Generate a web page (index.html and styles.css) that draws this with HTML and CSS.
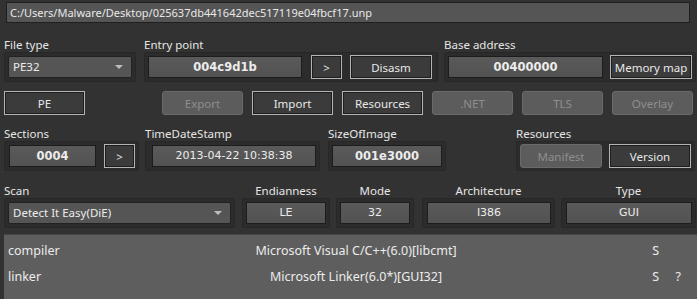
FILE: index.html
```html
<!DOCTYPE html>
<html lang="en">
<head>
    <meta charset="utf-8">
    <title>Detect It Easy</title>
    <link rel="stylesheet" href="styles.css">
</head>
<body>
    <div class="path">C:/Users/Malware/Desktop/025637db441642dec517119e04fbcf17.unp</div>

    <div class="row row1">
        <div class="group g-filetype">
            <div class="label">File type</div>
            <div class="frame">
                <div class="combo w-filetype">PE32<span class="arrow"></span></div>
            </div>
        </div>
        <div class="group g-entry">
            <div class="label">Entry point</div>
            <div class="frame">
                <div class="value bold w-entry">004c9d1b</div>
                <button class="btn small">&gt;</button>
                <button class="btn w-82">Disasm</button>
            </div>
        </div>
        <div class="group g-base">
            <div class="label">Base address</div>
            <div class="frame">
                <div class="value bold w-base">00400000</div>
                <button class="btn w-82">Memory map</button>
            </div>
        </div>
    </div>

    <div class="row row2">
        <button class="btn w-81">PE</button>
        <div class="buttons">
            <button class="btn off">Export</button>
            <button class="btn">Import</button>
            <button class="btn">Resources</button>
            <button class="btn off">.NET</button>
            <button class="btn off">TLS</button>
            <button class="btn off">Overlay</button>
        </div>
    </div>

    <div class="row row3">
        <div class="group g-sections">
            <div class="label">Sections</div>
            <div class="frame">
                <div class="value bold w-sections">0004</div>
                <button class="btn small">&gt;</button>
            </div>
        </div>
        <div class="group g-time">
            <div class="label">TimeDateStamp</div>
            <div class="frame">
                <div class="value w-time">2013-04-22 10:38:38</div>
            </div>
        </div>
        <div class="group g-size">
            <div class="label">SizeOfImage</div>
            <div class="frame">
                <div class="value bold w-size">001e3000</div>
            </div>
        </div>
        <div class="group g-res">
            <div class="label">Resources</div>
            <div class="frame">
                <button class="btn off w-82">Manifest</button>
                <button class="btn w-82">Version</button>
            </div>
        </div>
    </div>

    <div class="row row4">
        <div class="group g-scan">
            <div class="label">Scan</div>
            <div class="frame">
                <div class="combo w-scan">Detect It Easy(DiE)<span class="arrow"></span></div>
            </div>
        </div>
        <div class="group g-endian center">
            <div class="label">Endianness</div>
            <div class="frame">
                <div class="value w-endian">LE</div>
            </div>
        </div>
        <div class="group g-mode center">
            <div class="label">Mode</div>
            <div class="frame">
                <div class="value w-mode">32</div>
            </div>
        </div>
        <div class="group g-arch center">
            <div class="label">Architecture</div>
            <div class="frame">
                <div class="value w-arch">I386</div>
            </div>
        </div>
        <div class="group g-type center">
            <div class="label">Type</div>
            <div class="frame">
                <div class="value w-type">GUI</div>
            </div>
        </div>
    </div>

    <div class="results">
        <div class="result">
            <span class="kind">compiler</span>
            <span class="name">Microsoft Visual C/C++(6.0)[libcmt]</span>
            <span class="flag">S</span>
            <span class="info"></span>
        </div>
        <div class="result">
            <span class="kind">linker</span>
            <span class="name">Microsoft Linker(6.0*)[GUI32]</span>
            <span class="flag">S</span>
            <span class="info">?</span>
        </div>
    </div>
</body>
</html>
```

FILE: styles.css
```css
body {
    margin: 0;
    padding-top: 2px;
    background-color: #323232;
    color: #e6e6e6;
    font-family: "Noto Sans", "Open Sans", sans-serif;
    font-size: 11px;
    width: 697px;
    height: 299px;
    overflow: hidden;
}
.path {
    margin: 0 7px 0 6px;
    height: 19px;
    line-height: 19px;
    padding-left: 3px;
    background: #555;
    border: 1px solid #1f1f1f;
    color: #e8e8e8;
}
.row {
    display: flex;
    align-items: flex-end;
}
.row1 { margin-top: 14px; padding-left: 4px; }
.row2 { margin-top: 9px; padding-left: 4px; height: 24px; }
.row3 { margin-top: 11px; padding-left: 4px; }
.row4 { margin-top: 12px; padding-left: 4px; }

.label {
    height: 15px;
    line-height: 15px;
    font-size: 11.5px;
    color: #e6e6e6;
}
.center .label { text-align: center; }
.frame {
    display: flex;
    align-items: center;
    height: 28px;
    padding: 0 3px;
    background: #2c2c2c;
    border: 1px solid #272727;
    border-radius: 2px;
}

/* group positions */
.g-filetype { width: 132px; }
.g-entry { width: 294px; margin-left: 8px; }
.g-base { width: 252px; margin-left: 6px; }
.g-sections { width: 135px; }
.g-time { width: 175px; margin-left: 6px; }
.g-size { width: 118px; margin-left: 8px; }
.g-res { width: 179px; margin-left: 70px; }
.g-scan { width: 231px; }
.g-endian { width: 88px; margin-left: 7px; }
.g-mode { width: 78px; margin-left: 6px; }
.g-arch { width: 133px; margin-left: 8px; }
.g-type { width: 135px; margin-left: 6px; }

.value {
    height: 20px;
    line-height: 20px;
    background: linear-gradient(#5a5a5a, #525252);
    border: 1px solid #1c1c1c;
    text-align: center;
    font-family: "DejaVu Sans", Verdana, sans-serif;
    font-size: 11px;
    color: #ececec;
}
.value.bold { font-weight: bold; font-size: 11.5px; }

.w-entry { width: 152px; margin-right: 9px; }
.w-base { width: 153px; margin-right: 7px; }
.w-sections { width: 85px; margin-left: 1px; margin-right: 8px; }
.w-time { width: 163px; margin-left: 3px; }
.w-size { width: 108px; }
.w-endian { width: 78px; }
.w-mode { width: 69px; }
.w-arch { width: 123px; margin-left: 1px; }
.w-type { width: 125px; margin-left: 1px; }

.combo {
    position: relative;
    height: 20px;
    line-height: 20px;
    padding-left: 4px;
    background: #555;
    border: 1px solid #222;
    border-radius: 2px;
    color: #ececec;
    font-size: 11.5px;
}
.w-filetype { width: 120px; }
.w-scan { width: 218px; }
.arrow {
    position: absolute;
    right: 8px;
    top: 8px;
    width: 0;
    height: 0;
    border-left: 4px solid transparent;
    border-right: 4px solid transparent;
    border-top: 4px solid #bdbdbd;
}

.btn {
    height: 24px;
    padding: 0;
    background: #3b3b3b;
    color: #e8e8e8;
    border: 1px solid #b4b4b4;
    box-shadow: inset 0 0 0 1px #1e1e1e;
    font-family: "Noto Sans", "Open Sans", sans-serif;
    font-size: 11.5px;
    cursor: pointer;
}
.btn.off {
    background: #5c5c5c;
    color: #8e8e8e;
    border: 1px solid #6a6a6a;
    border-radius: 3px;
    box-shadow: none;
}
.btn.small { width: 31px; margin-right: 8px; }
.g-sections .btn.small { margin-right: 0; }
.w-82 { width: 82px; }
.w-81 { width: 81px; }
.buttons {
    display: flex;
    gap: 9px;
    margin-left: 77px;
}
.buttons .btn { width: 81px; }
.g-res .btn.off { margin-right: 7px; }

.results {
    margin: 6px 0 0 4px;
    height: 64px;
    background: #5e5e5e;
    border-top: 1px solid #454545;
    padding-top: 3px;
    color: #ececec;
    font-size: 12.5px;
}
.result {
    display: flex;
    height: 26px;
    line-height: 26px;
}
.kind { width: 113px; padding-left: 4px; }
.name { width: 470px; text-align: center; }
.flag { width: 68px; text-align: right; }
.info { width: 22px; text-align: right; }
```
